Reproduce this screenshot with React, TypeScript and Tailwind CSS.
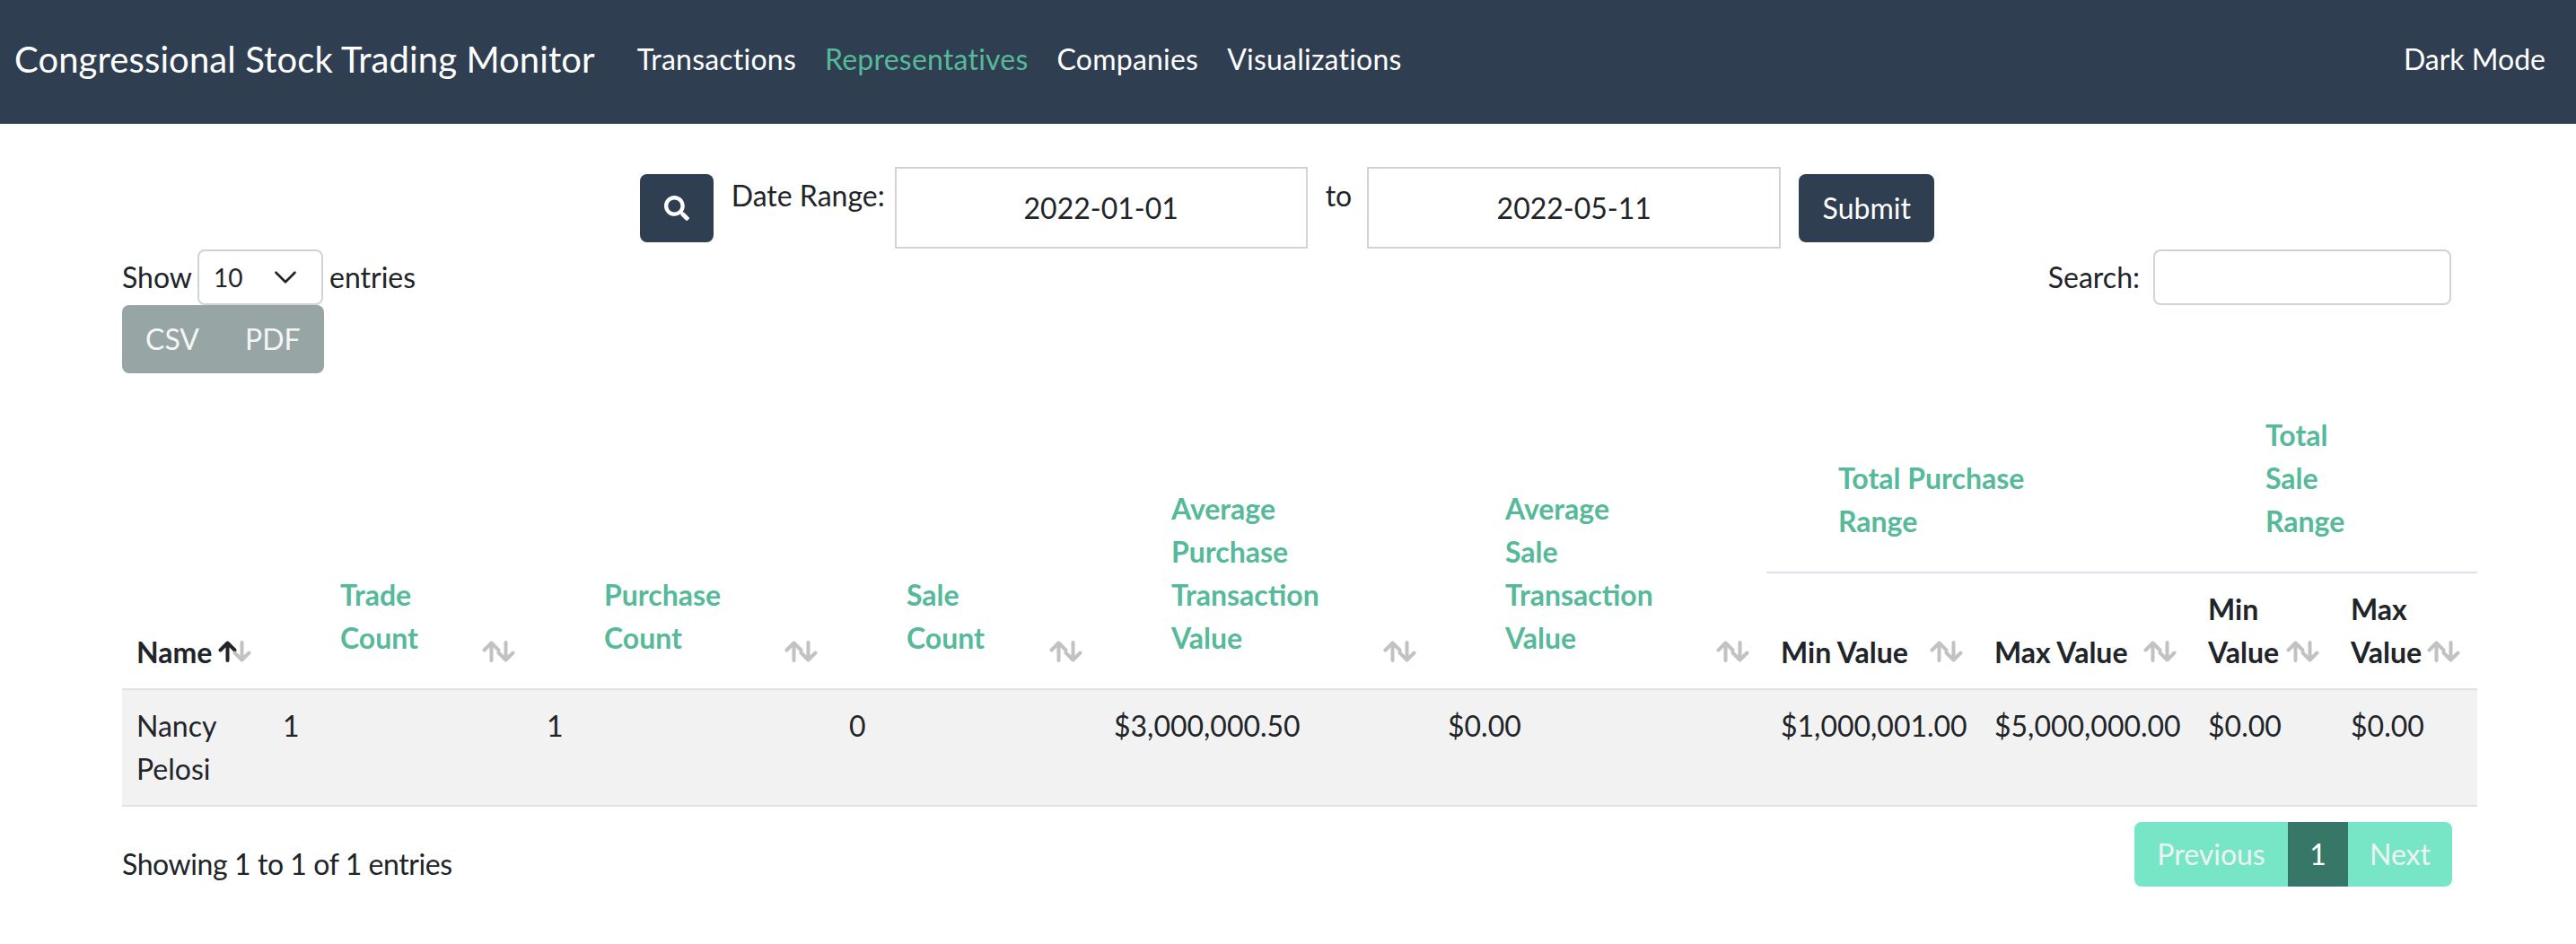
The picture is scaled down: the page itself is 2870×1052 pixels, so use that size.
import { ChevronDown } from 'lucide-react'
import { FaSearch } from 'react-icons/fa'

const green = 'text-[#56ba9a]'

function Arrow({ up, dark }: { up?: boolean; dark?: boolean }) {
  return (
    <svg
      viewBox="0 0 21 24"
      className={`w-[21px] h-[24px] ${up ? '' : '-ml-[5px]'} ${dark ? 'text-[#212529]' : 'text-[#c2c2c2]'}`}
      fill="none"
      stroke="currentColor"
      strokeWidth="4"
      strokeLinecap="round"
      strokeLinejoin="round"
    >
      {up ? <path d="M10.5 22V2.5M2.5 10.5l8-8 8 8" /> : <path d="M10.5 2v19.5M2.5 13.5l8 8 8-8" />}
    </svg>
  )
}

// datatables 정렬 화살표
function SortArrows({ active }: { active?: boolean }) {
  return (
    <span className="absolute right-[19px] bottom-[29px] flex">
      <Arrow up dark={active} />
      <Arrow />
    </span>
  )
}

function GreenHead({ lines }: { lines: string[] }) {
  return (
    <div className={`pl-16 mb-4 font-bold ${green}`}>
      {lines.map(l => (
        <div key={l}>{l}</div>
      ))}
    </div>
  )
}

const thBase = 'relative p-4 text-left align-bottom font-bold'

export default function App() {
  return (
    <div className="min-h-[1052px] bg-white text-[32px] leading-[48px] text-[#212529] font-['Lato',sans-serif]">
      <nav className="h-[138px] bg-[#2f3e50] flex items-center pl-4 pr-[34px] pb-[6px] text-white">
        <span className="text-[40px] tracking-[0.1px] mr-[47px]">Congressional Stock Trading Monitor</span>
        <div className="flex gap-8 tracking-[0.22px]">
          <span>Transactions</span>
          <span className={green}>Representatives</span>
          <span>Companies</span>
          <span>Visualizations</span>
        </div>
        <span className="ml-auto">Dark Mode</span>
      </nav>

      <main className="pl-[136px] pr-[110px]">
        <div className="flex justify-center items-start pt-[48px] mr-[-108px] ml-[-136px]">
          <button className="w-[82px] h-[76px] mt-2 mr-5 rounded-lg bg-[#2f3e50] text-white flex items-center justify-center">
            <FaSearch size={28} />
          </button>
          <span className="mt-2 mr-[11px]">Date Range:</span>
          <div className="w-[460px] h-[91px] border-2 border-[#ced4da] flex items-center justify-center">2022-01-01</div>
          <span className="mt-2 ml-5 mr-[17px]">to</span>
          <div className="w-[461px] h-[91px] border-2 border-[#ced4da] flex items-center justify-center">2022-05-11</div>
          <button className="w-[151px] h-[76px] mt-2 ml-5 rounded-lg bg-[#2f3e50] text-white">Submit</button>
        </div>

        <div className="flex justify-between items-center mt-px mr-[29px] h-[62px]">
          <div className="flex items-center">
            <span>Show</span>
            <div className="w-[140px] h-[62px] ml-[6px] mr-[7px] border-2 border-[#ced4da] rounded-lg flex items-center justify-between pl-4 pr-[19px] text-[28px]">
              10
              <ChevronDown size={42} strokeWidth={1.5} />
            </div>
            <span>entries</span>
          </div>
          <div className="flex items-center gap-[15px]">
            <span>Search:</span>
            <div className="w-[332px] h-[62px] border-2 border-[#ced4da] rounded-lg" />
          </div>
        </div>

        <div className="inline-flex h-[76px] w-[225px] items-center rounded-lg bg-[#98a5a5] text-[#f4f6f6]">
          <span className="pl-[26px] pr-[25px]">CSV</span>
          <span className="pl-[26px]">PDF</span>
        </div>

        <table className="mt-[29px] w-[2624px] table-fixed border-collapse">
          <colgroup>
            <col className="w-[163px]" />
            <col className="w-[294px]" />
            <col className="w-[337px]" />
            <col className="w-[295px]" />
            <col className="w-[372px]" />
            <col className="w-[371px]" />
            <col className="w-[238px]" />
            <col className="w-[238px]" />
            <col className="w-[159px]" />
            <col className="w-[157px]" />
          </colgroup>
          <thead className="border-b-2 border-[#dee2e6]">
            <tr>
              <th rowSpan={2} className={thBase}>
                Name
                <SortArrows active />
              </th>
              <th rowSpan={2} className={thBase}>
                <GreenHead lines={['Trade', 'Count']} />
                <SortArrows />
              </th>
              <th rowSpan={2} className={thBase}>
                <GreenHead lines={['Purchase', 'Count']} />
                <SortArrows />
              </th>
              <th rowSpan={2} className={thBase}>
                <GreenHead lines={['Sale', 'Count']} />
                <SortArrows />
              </th>
              <th rowSpan={2} className={thBase}>
                <GreenHead lines={['Average', 'Purchase', 'Transaction', 'Value']} />
                <SortArrows />
              </th>
              <th rowSpan={2} className={thBase}>
                <GreenHead lines={['Average', 'Sale', 'Transaction', 'Value']} />
                <SortArrows />
              </th>
              <th colSpan={2} className={`${thBase} border-b-2 border-[#dee2e6]`}>
                <GreenHead lines={['Total Purchase', 'Range']} />
              </th>
              <th colSpan={2} className={`${thBase} border-b-2 border-[#dee2e6]`}>
                <GreenHead lines={['Total', 'Sale', 'Range']} />
              </th>
            </tr>
            <tr>
              <th className={thBase}>
                Min Value
                <SortArrows />
              </th>
              <th className={thBase}>
                Max Value
                <SortArrows />
              </th>
              <th className={thBase}>
                Min
                <br />
                Value
                <SortArrows />
              </th>
              <th className={thBase}>
                Max
                <br />
                Value
                <SortArrows />
              </th>
            </tr>
          </thead>
          <tbody>
            <tr className="bg-[#f2f2f2] border-b-2 border-[#dee2e6]">
              <td className="p-4 align-top">Nancy Pelosi</td>
              <td className="p-4 align-top">1</td>
              <td className="p-4 align-top">1</td>
              <td className="p-4 align-top">0</td>
              <td className="p-4 align-top">$3,000,000.50</td>
              <td className="p-4 align-top">$0.00</td>
              <td className="p-4 align-top">$1,000,001.00</td>
              <td className="p-4 align-top">$5,000,000.00</td>
              <td className="p-4 align-top">$0.00</td>
              <td className="p-4 align-top">$0.00</td>
            </tr>
          </tbody>
        </table>

        <div className="flex justify-between items-start mt-[17px] mr-7">
          <span className="mt-[23px] tracking-[-0.42px]">Showing 1 to 1 of 1 entries</span>
          <div className="flex h-[72px] items-center rounded-lg overflow-hidden bg-[#76e6c6] text-[#eef3f1]">
            <span className="w-[171px] text-center">Previous</span>
            <span className="w-[67px] h-full flex items-center justify-center bg-[#377768] text-white">1</span>
            <span className="w-[116px] text-center">Next</span>
          </div>
        </div>
      </main>
    </div>
  )
}
